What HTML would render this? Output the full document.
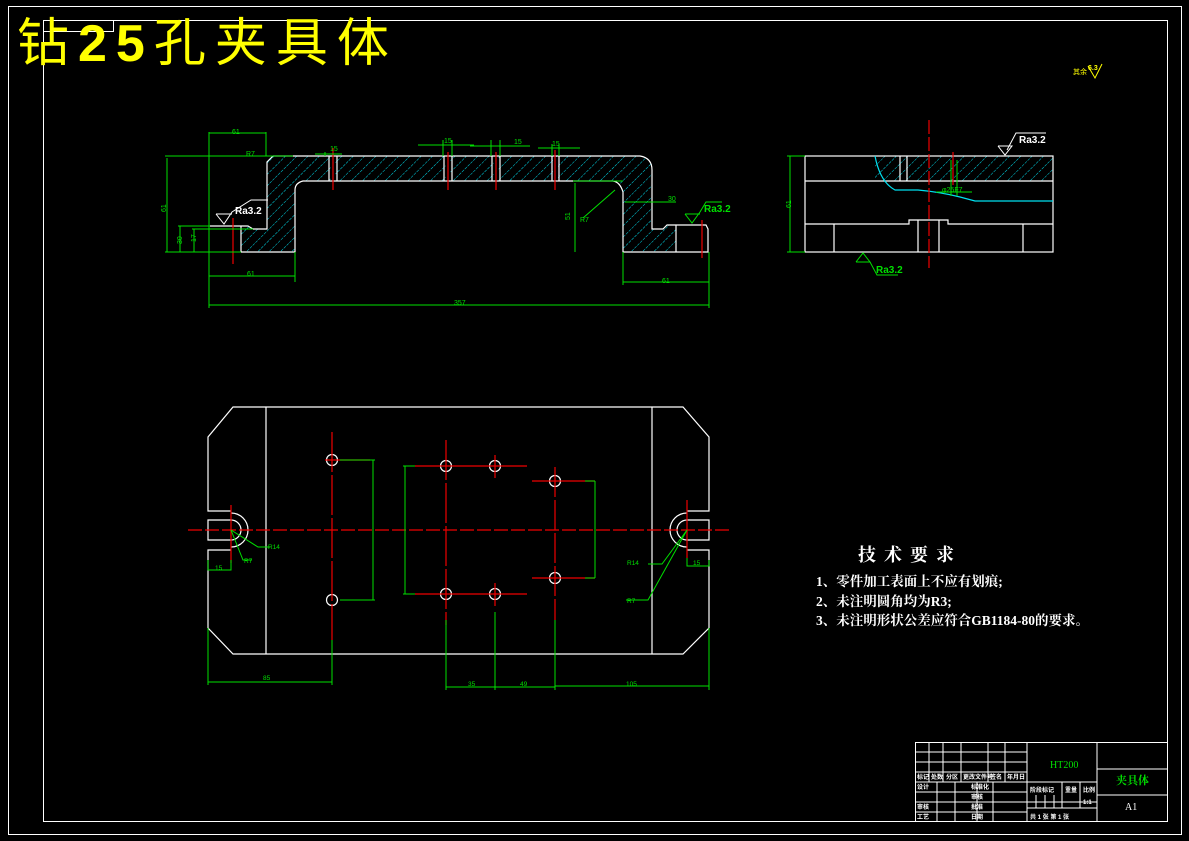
<!DOCTYPE html>
<html><head><meta charset="utf-8"><style>
html,body{margin:0;padding:0;background:#000;width:1189px;height:841px;overflow:hidden}
svg{display:block}
</style></head><body>
<svg width="1189" height="841" viewBox="0 0 1189 841" xmlns="http://www.w3.org/2000/svg" font-family="'Liberation Sans','Noto Sans CJK SC',sans-serif">
<defs>
<pattern id="h" width="8" height="8" patternUnits="userSpaceOnUse" patternTransform="rotate(45)">
<line x1="0" y1="0" x2="0" y2="8" stroke="#00d8e8" stroke-width="1" stroke-dasharray="3 1"/>
</pattern>
</defs>
<rect width="1189" height="841" fill="#000"/>
<!-- frames -->
<rect x="8.5" y="6.5" width="1173" height="828" fill="none" stroke="#fff" stroke-width="1"/>
<rect x="43.5" y="20.5" width="1124" height="801" fill="none" stroke="#fff" stroke-width="1"/>
<rect x="43.5" y="20.5" width="70" height="11" fill="none" stroke="#fff" stroke-width="1"/>
<text x="17" y="61" style="font-family:'Liberation Sans','Noto Sans CJK SC',sans-serif;font-size:52px;letter-spacing:9px" fill="#ffff00">钻<tspan font-weight="bold">25</tspan>孔夹具体</text>
<text x="1073" y="74" font-size="7" fill="#ff0">其余</text>
<text x="1088" y="70" font-size="7" fill="#ff0" font-weight="bold">6.3</text>
<path d="M1088 66 L1095 78 L1102 64" fill="none" stroke="#ff0"/>

<!-- FRONT VIEW -->
<g>
<path d="M273 156 L640 156 Q652 158 652 170 L652 229 L663 229 L667 225 L676 225 L676 252 L623 252 L623 192 Q620 182 613 181 L303 181 Q295 183 295 190 L295 252 L241 252 L241 226 L248 226 L253 229 L267 229 L267 162 Z" fill="url(#h)"/>
<g stroke="#fff" stroke-width="1.2" fill="none">
<path d="M273 156 L640 156 Q652 158 652 170 L652 229 L663 229 L667 225 L706 225 L708 229 L708 252 L623 252 L623 192 Q620 182 613 181 L303 181 Q295 183 295 190 L295 252 L241 252"/>
<path d="M241 252 L241 226 M210 226 L248 226 L253 229 L267 229 L267 162 L273 156"/>
<path d="M676 225 L676 252"/>
<path d="M329 156V181M337 156V181M444 156V181M452 156V181M492 156V181M500 156V181M552 156V181M559 156V181"/>
</g>
<g stroke="#000" stroke-width="5"><path d="M333 157V180M448 157V180M496 157V180M555.5 157V180"/></g>
<g stroke="#e00" stroke-width="1.2"><path d="M333 148V190M448 152V190M496 152V190M555 150V190M233 218V264M702 220V258"/></g>
<g stroke="#00e000" stroke-width="1" fill="none">
<path d="M165 156H293M167 158V252M165 252H241M209 132V270M266 132V156M209 133H266M180 226V252M194 229V252M178 226H210M192 229H253"/>
<path d="M209 276H295M295 252V282M209 305H709M209 270V308M709 252V308M623 252V285M623 282H709M625 202H676M573 181H623M575 183V252M583 218L615 190"/>
<path d="M315 154H342M325 152V156M418 145H474M443 140V156M452 140V156M470 146H530M491 140V156M500 140V156M538 148H580M552 144V156M559 144V156"/>
</g>
<g fill="#00e000" font-size="7">
<text x="232" y="134">61</text><text x="246" y="156">R7</text><text x="160" y="206" transform="rotate(-90 166 206)">61</text>
<text x="174" y="244" transform="rotate(-90 178 240)">30</text><text x="190" y="244" transform="rotate(-90 192 240)">17</text>
<text x="247" y="276">61</text><text x="454" y="305">357</text><text x="662" y="283">61</text><text x="668" y="201">30</text>
<text x="580" y="222">R7</text><text x="566" y="220" transform="rotate(-90 568 218)">51</text>
<text x="330" y="151">15</text><text x="444" y="143">15</text><text x="514" y="144">15</text><text x="552" y="146">15</text>
</g>
<g fill="#fff" font-size="10" font-weight="bold"><text x="235" y="214">Ra3.2</text></g>
<path d="M216 214L224 224L232 212L251 200H268" fill="none" stroke="#fff"/>
<path d="M216 214H232" stroke="#fff"/>
<text x="704" y="212" font-size="10" fill="#00e000" font-weight="bold">Ra3.2</text>
<path d="M685 214L692 223L700 212L706 202H722M685 214H700" fill="none" stroke="#00e000"/>
</g>

<!-- SIDE VIEW -->
<g>
<rect x="875" y="156" width="178" height="25" fill="url(#h)"/>
<g stroke="#fff" stroke-width="1.2" fill="none">
<rect x="805" y="156" width="248" height="96"/>
<path d="M805 181H1053M805 224H909V220H948V224H1053M834 224V252M918 220V252M939 220V252M1023 224V252M900 156V181M907 156V181"/>
</g>
<path d="M875 156 Q880 182 895 190 L918 190 Q940 192 960 197 L975 201 L1053 201" fill="none" stroke="#00e0f0" stroke-width="1.2"/>
<g stroke="#e00" stroke-width="1.2"><path d="M929 120V268" stroke-dasharray="14 3"/><path d="M953 152V185"/></g>
<g stroke="#00e000" fill="none"><path d="M787 156H805M787 252H805M790 156V252M951 160V196M957 160V196M936 192H972"/>
<path d="M856 262L863 253L870 262H856M870 262L877 275H898"/></g>
<text x="942" y="192" font-size="7" fill="#00e000">φ25F7</text>
<text x="785" y="206" font-size="7" fill="#00e000" transform="rotate(-90 789 204)">61</text>
<text x="876" y="273" font-size="10" fill="#00e000" font-weight="bold">Ra3.2</text>
<text x="1019" y="143" font-size="10" fill="#fff" font-weight="bold">Ra3.2</text>
<path d="M998 146L1005 155L1012 146H998M1007 150L1016 133H1046" fill="none" stroke="#fff"/>
</g>

<!-- PLAN VIEW -->
<g stroke="#fff" stroke-width="1.2" fill="none">
<path d="M231 511H208V437L233 407H683L709 437V511H687"/>
<path d="M231 520H208V540H231M687 520H709V540H687"/>
<path d="M231 550H208V628L233 654H683L709 628V550H687"/>
<path d="M266 407V654M652 407V654"/>
<path d="M231 513 A17 17 0 0 1 231 547M231 520 A10 10 0 0 1 231 540"/>
<path d="M687 513 A17 17 0 0 0 687 547M687 520 A10 10 0 0 0 687 540"/>
<circle cx="332" cy="460" r="5.5"/><circle cx="332" cy="600" r="5.5"/>
<circle cx="446" cy="466" r="5.5"/><circle cx="495" cy="466" r="5.5"/>
<circle cx="446" cy="594" r="5.5"/><circle cx="495" cy="594" r="5.5"/>
<circle cx="555" cy="481" r="5.5"/><circle cx="555" cy="578" r="5.5"/>
</g>
<g stroke="#e00" stroke-width="1.2">
<path d="M188 530H732" stroke-dasharray="14 3"/>
<path d="M332 432V640" stroke-dasharray="40 3"/>
<path d="M446 440V625" stroke-dasharray="40 3"/><path d="M495 455V478M495 583V606"/>
<path d="M555 467V620" stroke-dasharray="30 3"/>
<path d="M325 460H370M415 466H527M415 594H527M532 481H595M532 578H595M231 505V563M687 500V558"/>
</g>
<g stroke="#00e000" fill="none">
<path d="M340 460H375M373 460V600M340 600H375M403 466H415M403 594H415M405 466V594M595 481V578M585 481H595M585 578H595"/>
<path d="M208 628V685M332 640V685M208 682H332M446 620V690M495 612V690M555 620V690M709 628V690M446 687H555M555 686H709"/>
<path d="M208 560V570H231V560M687 558V566H709V560M231 530L258 547H270M231 530L243 560H252M687 530L662 564H648M687 530L648 600H626"/>
</g>
<g fill="#00e000" font-size="6.5">
<text x="268" y="549">R14</text><text x="244" y="563">R7</text><text x="215" y="570">15</text>
<text x="627" y="565">R14</text><text x="627" y="603">R7</text><text x="693" y="565">15</text>
<text x="263" y="680">85</text><text x="468" y="686">35</text><text x="520" y="686">49</text><text x="626" y="686">105</text>
</g>

<!-- tech requirements -->
<g fill="#fff" style="font-family:'Liberation Serif','Noto Serif CJK SC',serif;font-weight:bold">
<text x="858" y="561" style="font-size:18px;letter-spacing:8px">技术要求</text>
<text x="816" y="586" style="font-size:13.5px">1、零件加工表面上不应有划痕;</text>
<text x="816" y="606" style="font-size:13.5px">2、未注明圆角均为R3;</text>
<text x="816" y="625" style="font-size:13.5px">3、未注明形状公差应符合GB1184-80的要求。</text>
</g>

<!-- title block -->
<g stroke="#fff" stroke-width="1" fill="none">
<rect x="915.5" y="742.5" width="252" height="79"/>
<path d="M915 752H1027M915 762H1027M915 772H1027M915 782H1097M915 792H1027M915 802H1097M915 812H1027"/>
<path d="M929 742V782M943 742V782M961 742V782M988 742V782M1005 742V782M1027 742V822M1097 742V822M1097 769H1168M1097 795H1168"/>
<path d="M937 782V822M955 782V822M977 782V822M993 782V822M1027 808H1097M1062 782V808M1080 782V808M1036 795V808M1045 795V808M1054 795V808"/>
</g>
<g fill="#fff" font-size="6" font-weight="bold">
<text x="917" y="779">标记</text><text x="931" y="779">处数</text><text x="946" y="779">分区</text><text x="963" y="779">更改文件号</text><text x="990" y="779">签名</text><text x="1007" y="779">年月日</text>
<text x="917" y="789">设计</text><text x="971" y="789">标准化</text><text x="971" y="799">审核</text>
<text x="917" y="809">审核</text><text x="971" y="809">批准</text><text x="917" y="819">工艺</text><text x="971" y="819">日期</text>
<text x="1030" y="792">阶段标记</text><text x="1065" y="792">重量</text><text x="1083" y="792">比例</text>
<text x="1083" y="804">1:1</text><text x="1030" y="819">共 1 张   第 1 张</text>
</g>
<text x="1050" y="768" fill="#00e000" style="font-family:'Liberation Serif',serif;font-size:10px">HT200</text>
<text x="1116" y="784" fill="#00e000" style="font-family:'Liberation Serif','Noto Serif CJK SC',serif;font-size:11px;font-weight:bold">夹具体</text>
<text x="1125" y="810" fill="#fff" style="font-family:'Liberation Serif',serif;font-size:10px">A1</text>
</svg>
</body></html>
